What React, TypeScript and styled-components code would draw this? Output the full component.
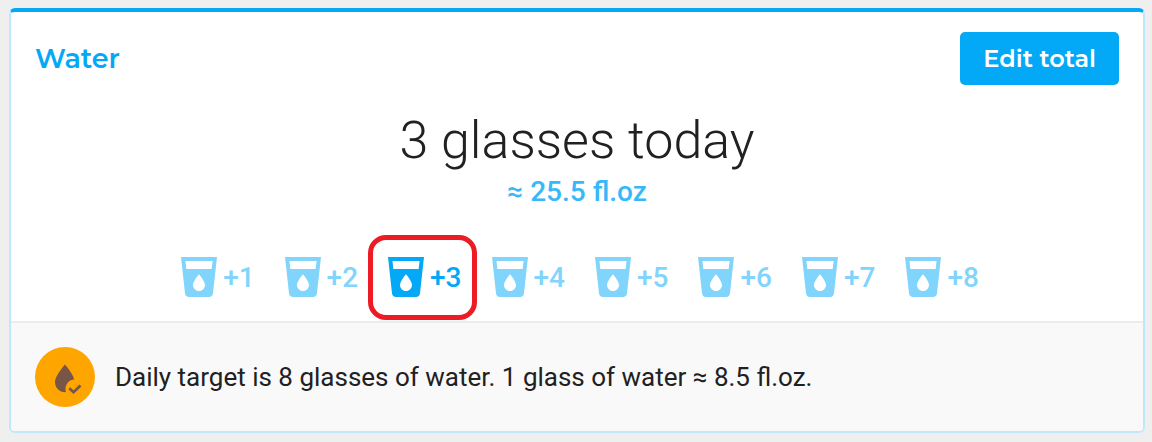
import React, { useState } from "react";
import styled, { createGlobalStyle, css } from "styled-components";

const blue = "#03a9f7";

const GlobalStyle = createGlobalStyle`
  body {
    margin: 0;
    background: #efefef;
    color: #212121;
    font-family: Roboto, "Liberation Sans", sans-serif;
  }
`;

const Card = styled.section`
  box-sizing: border-box;
  margin: 8px 7px 9px 9px;
  border: 2px solid #c0e8fd;
  border-top: 4px solid ${blue};
  border-radius: 6px;
  background: #ffffff;
  overflow: hidden;
`;

const Header = styled.header`
  display: flex;
  align-items: center;
  justify-content: space-between;
  padding: 20px 24px 0;
`;

const Title = styled.h2`
  margin: 0;
  color: ${blue};
  font: 600 27px/36px Montserrat, Inter, sans-serif;
`;

const EditButton = styled.button`
  padding: 9px 23px 8px;
  border: 0;
  border-radius: 5px;
  background: ${blue};
  color: #ffffff;
  font: 600 24px/36px Montserrat, Inter, sans-serif;
  cursor: pointer;
`;

const Summary = styled.div`
  display: flex;
  flex-direction: column;
  align-items: center;
  padding-top: 24px;
`;

const Total = styled.p`
  margin: 0;
  font-size: 52px;
  font-weight: 300;
  line-height: 64px;
`;

const Volume = styled.p`
  margin: 0;
  color: #36b9f9;
  font-size: 28px;
  font-weight: 500;
  line-height: 38px;
`;

const Glasses = styled.div`
  display: flex;
  flex-wrap: wrap;
  justify-content: center;
  gap: 24px;
  padding: 42px 24px 20px;
`;

const GlassButton = styled.button<{ $active: boolean }>`
  position: relative;
  display: flex;
  align-items: center;
  height: 48px;
  padding: 0;
  border: 0;
  background: none;
  color: ${(p) => (p.$active ? blue : "#81d4fb")};
  font: 500 28px/48px Roboto, "Liberation Sans", sans-serif;
  cursor: pointer;

  ${(p) =>
    p.$active &&
    css`
      &::after {
        content: "";
        position: absolute;
        inset: -18px -15px -19px -14px;
        border: 5px solid #ed1c24;
        border-radius: 18px;
        pointer-events: none;
      }
    `}
`;

const GlassLabel = styled.span`
  padding-top: 2px;
`;

const GlassSvg = styled.svg`
  width: 48px;
  height: 48px;
  fill: currentColor;
`;

const Footer = styled.footer`
  display: flex;
  align-items: center;
  gap: 20px;
  padding: 24px;
  border-top: 2px solid #ececec;
  background: #f9f9f9;
`;

const Badge = styled.svg`
  flex: none;
  width: 60px;
  height: 60px;
  border-radius: 50%;
  background: #ffa500;
`;

const Target = styled.p`
  margin: 0;
  font-size: 26px;
  line-height: 36px;
`;

const GlassIcon = () => (
  <GlassSvg viewBox="0 0 24 24" aria-hidden="true">
    <path d="M3 2l2.01 18.23C5.13 21.23 5.97 22 7 22h10c1.03 0 1.87-.77 1.99-1.77L21 2H3zm9 17c-1.66 0-3-1.34-3-3 0-2 3-5.4 3-5.4s3 3.4 3 5.4c0 1.66-1.34 3-3 3zm6.33-11H5.67l-.44-4h13.55l-.45 4z" />
  </GlassSvg>
);

const DropCheckIcon = () => (
  <Badge viewBox="0 0 60 60" aria-hidden="true">
    <path
      d="M30 17.5C30 17.5 20 28.8 20 35.2C20 40.8 24.5 45.2 30 45.2C30.3 45.2 30.7 45.2 31 45.1C30.7 44.1 30.5 43 30.5 42C30.5 37 34.2 32.9 39.2 32.2C37.4 26 30 17.5 30 17.5Z"
      fill="#795548"
    />
    <path d="M34.3 41.3L38.5 45.2L45.5 38.5" fill="none" stroke="#795548" strokeWidth="2.8" />
  </Badge>
);

const counts = [1, 2, 3, 4, 5, 6, 7, 8];

export default function App() {
  const [glasses, setGlasses] = useState(3);

  return (
    <>
      <GlobalStyle />
      <Card>
        <Header>
          <Title>Water</Title>
          <EditButton type="button">Edit total</EditButton>
        </Header>
        <Summary>
          <Total>{glasses} glasses today</Total>
          <Volume>≈ {(glasses * 8.5).toFixed(1)} fl.oz</Volume>
        </Summary>
        <Glasses>
          {counts.map((n) => (
            <GlassButton
              key={n}
              type="button"
              $active={n === glasses}
              aria-pressed={n === glasses}
              onClick={() => setGlasses(n)}
            >
              <GlassIcon />
              <GlassLabel>+{n}</GlassLabel>
            </GlassButton>
          ))}
        </Glasses>
        <Footer>
          <DropCheckIcon />
          <Target>Daily target is 8 glasses of water. 1 glass of water ≈ 8.5 fl.oz.</Target>
        </Footer>
      </Card>
    </>
  );
}
